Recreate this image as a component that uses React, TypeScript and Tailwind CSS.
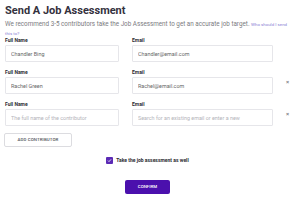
import React from "react";

const contributors = [
  { name: "Chandler Bing", email: "Chandler@email.com", removable: false },
  { name: "Rachel Green", email: "Rachel@email.com", removable: true },
  { name: "", email: "", removable: true },
];

const App = () => {
  return (
    <div className="w-[300px] h-[204px] bg-white pl-[5px] pr-[10px] pt-[5px] font-['Roboto',sans-serif] overflow-hidden">
      <h1 className="text-[11px] leading-[12px] font-bold text-[#34313d]">
        Send A Job Assessment
      </h1>
      <p className="mt-[3px] text-[6.3px] leading-[9px] text-[#7b7b80]">
        We recommend 3-5 contributors take the Job Assessment to get an accurate job target.{" "}
        <span className="text-[4.4px] leading-[9px] text-[#8b7fd4]">Who should I send this to?</span>
      </p>
      <div className="-mt-[1px]">
        {contributors.map((c, i) => (
          <div
            key={i}
            className={`grid grid-cols-[114px_141px_1fr] gap-x-[13px] ${i === 0 ? "" : "mt-[7px]"}`}
          >
            <div>
              <label className="block text-[5px] leading-[6px] font-bold text-[#2b2b30]">
                Full Name
              </label>
              <input
                readOnly
                value={c.name}
                placeholder="The full name of the contributor"
                className="block mt-[2px] w-full h-[17px] border border-[#e6e6ea] rounded-[1px] px-[5px] text-[5.4px] text-[#666] placeholder:text-[#b4b4ba] outline-none"
              />
            </div>
            <div>
              <label className="block text-[5px] leading-[6px] font-bold text-[#2b2b30]">
                Email
              </label>
              <input
                readOnly
                value={c.email}
                placeholder="Search for an existing email or enter a new"
                className="block mt-[2px] w-full h-[17px] border border-[#e6e6ea] rounded-[1px] px-[5px] text-[5.4px] text-[#666] placeholder:text-[#b4b4ba] outline-none"
              />
            </div>
            <div className="flex justify-end pr-[1px] pt-[10px]">
              {c.removable && (
                <span className="text-[6px] leading-[6px] font-bold text-[#8a8a90]">×</span>
              )}
            </div>
          </div>
        ))}
      </div>
      <button className="block mt-[7px] w-[68px] h-[14px] border border-[#dcdce0] rounded-[2px] bg-white text-[4.4px] font-medium tracking-[0.1px] text-[#55555c] -ml-[1px]">
        ADD CONTRIBUTOR
      </button>
      <div className="mt-[10px] flex justify-center items-center gap-[3px]">
        <span className="w-[7px] h-[7px] rounded-[1px] bg-[#5b2ab5] flex items-center justify-center">
          <svg viewBox="0 0 10 10" className="w-[5px] h-[5px]">
            <path d="M2 5.2l2 2 4-4.4" stroke="#fff" strokeWidth="1.6" fill="none" />
          </svg>
        </span>
        <span className="text-[5px] leading-[7px] font-bold text-[#2b2b30]">
          Take the job assessment as well
        </span>
      </div>
      <div className="mt-[16px] flex justify-center">
        <button className="w-[45px] h-[14px] rounded-[2px] bg-[#4b10ad] text-white text-[4.4px] font-medium">
          CONFIRM
        </button>
      </div>
    </div>
  );
};

export default App;
